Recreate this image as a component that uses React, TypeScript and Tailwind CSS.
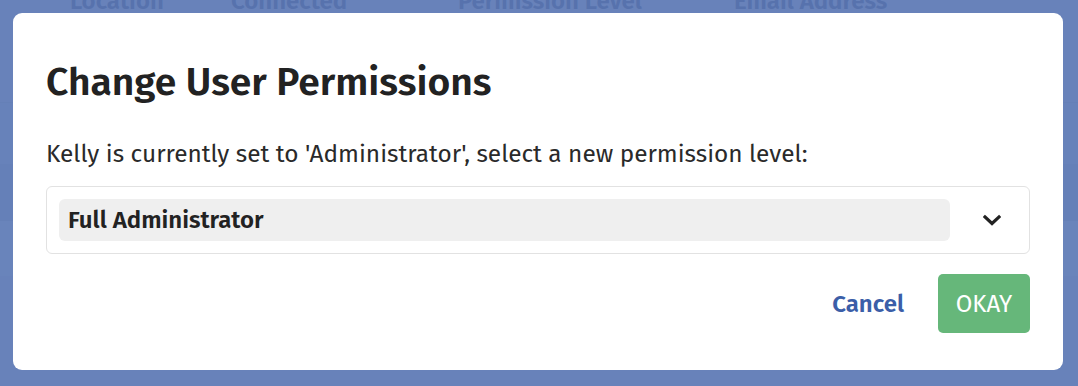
import React from 'react';

const font = { fontFamily: '"Fira Sans", "Open Sans", "Noto Sans", sans-serif' };

export default function App() {
  const columns = [
    { label: 'Location', w: 'w-[161px]' },
    { label: 'Connected', w: 'w-[227px]' },
    { label: 'Permission Level', w: 'w-[276px]' },
    { label: 'Email Address', w: 'w-[200px]' },
  ];

  return (
    <div className="relative h-[386px] w-[1078px] overflow-hidden bg-[#6882ba]" style={font}>
      {/* table behind the overlay */}
      <div className="flex flex-col">
        <div className="-mt-[14px] flex pl-[70px] text-[24px] leading-[30px] font-semibold text-[#5772ad]">
          {columns.map((c) => (
            <div key={c.label} className={c.w}>{c.label}</div>
          ))}
        </div>
        <div className="h-[86px]" />
        <div className="h-[62px] border-t border-[#6580b7] bg-[#6782ba]" />
        <div className="h-[56px] bg-[#6580b8]" />
        <div className="h-[56px] border-t border-[#6580b7] bg-[#6984bb]" />
      </div>

      {/* modal */}
      <div className="absolute inset-0 p-[13px]">
        <div className="flex h-[357px] w-[1050px] flex-col rounded-[9px] bg-white px-[33px] pt-[45px]">
          <h1 className="text-[39px] font-semibold leading-[48px] text-[#222222]">
            Change User Permissions
          </h1>
          <p className="mt-[33px] text-[24.4px] leading-[30px] text-[#2a2a2a]">
            Kelly is currently set to 'Administrator', select a new permission level:
          </p>
          <div className="mt-[17px] flex h-[68px] items-center rounded-[6px] border border-[#e2e2e2] pl-[12px] pr-[28px]">
            <div className="flex h-[42px] flex-1 items-center rounded-[6px] bg-[#efefef] px-[9px] text-[24px] font-semibold text-[#222222]">
              Full Administrator
            </div>
            <svg className="ml-[33px]" width="18" height="12" viewBox="0 0 18 12">
              <path d="M2 3 L9 9.5 L16 3" fill="none" stroke="#222222" strokeWidth="3.2" strokeLinecap="square" />
            </svg>
          </div>
          <div className="mt-[20px] flex items-center justify-end gap-[34px]">
            <button className="text-[24px] font-semibold text-[#3b5ea8]">Cancel</button>
            <button className="h-[59px] w-[92px] rounded-[5px] bg-[#66b77a] text-[24px] font-normal text-white">OKAY</button>
          </div>
        </div>
      </div>
    </div>
  );
}
